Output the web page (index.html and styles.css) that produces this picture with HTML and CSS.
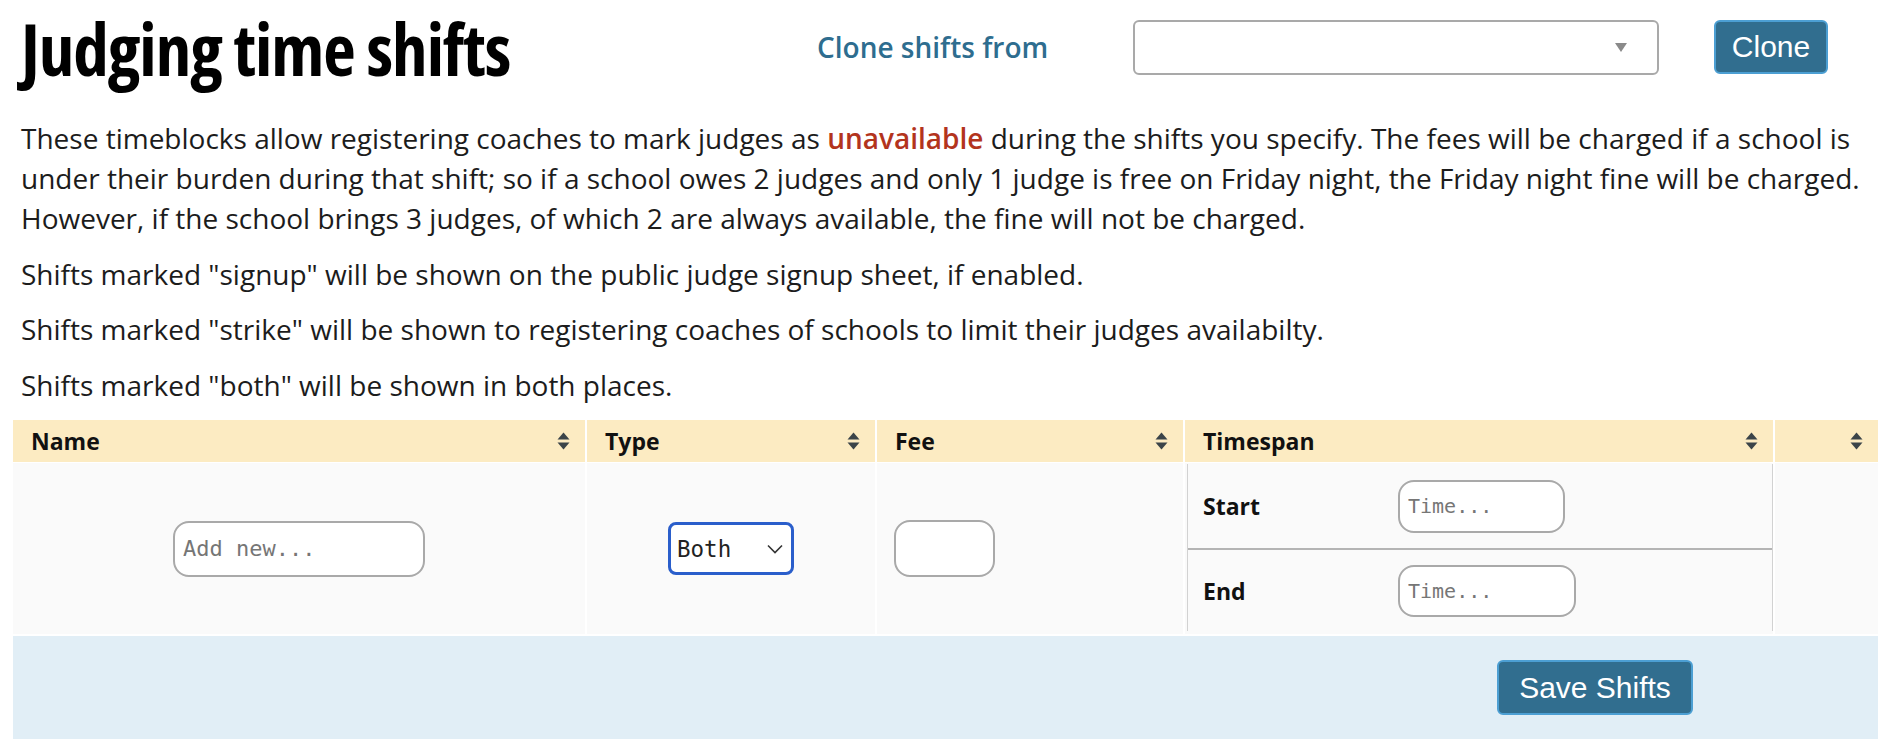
FILE: index.html
```html
<!DOCTYPE html>
<html lang="en">
<head>
<meta charset="utf-8">
<title>Judging time shifts</title>
<link rel="stylesheet" href="styles.css">
</head>
<body>
<div class="page">
  <header class="top">
    <h1 class="title">Judging time shifts</h1>
    <div class="clone">
      <label class="clone-label">Clone shifts from</label>
      <div class="clone-select">
        <svg class="caret" width="12" height="9" viewBox="0 0 12 9"><polygon points="0,0 12,0 6,9" fill="#8a8a8a"/></svg>
      </div>
      <button class="btn clone-btn">Clone</button>
    </div>
  </header>

  <section class="intro">
    <p>These timeblocks allow registering coaches to mark judges as <span class="warn">unavailable</span> during the shifts you specify. The fees will be charged if a school is under their burden during that shift; so if a school owes 2 judges and only 1 judge is free on Friday night, the Friday night fine will be charged. However, if the school brings 3 judges, of which 2 are always available, the fine will not be charged.</p>
    <p>Shifts marked "signup" will be shown on the public judge signup sheet, if enabled.</p>
    <p>Shifts marked "strike" will be shown to registering coaches of schools to limit their judges availabilty.</p>
    <p>Shifts marked "both" will be shown in both places.</p>
  </section>

  <div class="shifts">
    <div class="row thead">
      <div class="th">Name<svg class="sort" width="13" height="20" viewBox="0 0 13 20"><polygon points="0.5,8.5 6.5,1.5 12.5,8.5" fill="#3b4449"/><polygon points="0.5,11.5 6.5,18.5 12.5,11.5" fill="#3b4449"/></svg></div>
      <div class="th">Type<svg class="sort" width="13" height="20" viewBox="0 0 13 20"><polygon points="0.5,8.5 6.5,1.5 12.5,8.5" fill="#3b4449"/><polygon points="0.5,11.5 6.5,18.5 12.5,11.5" fill="#3b4449"/></svg></div>
      <div class="th">Fee<svg class="sort" width="13" height="20" viewBox="0 0 13 20"><polygon points="0.5,8.5 6.5,1.5 12.5,8.5" fill="#3b4449"/><polygon points="0.5,11.5 6.5,18.5 12.5,11.5" fill="#3b4449"/></svg></div>
      <div class="th">Timespan<svg class="sort" width="13" height="20" viewBox="0 0 13 20"><polygon points="0.5,8.5 6.5,1.5 12.5,8.5" fill="#3b4449"/><polygon points="0.5,11.5 6.5,18.5 12.5,11.5" fill="#3b4449"/></svg></div>
      <div class="th"><svg class="sort" width="13" height="20" viewBox="0 0 13 20"><polygon points="0.5,8.5 6.5,1.5 12.5,8.5" fill="#3b4449"/><polygon points="0.5,11.5 6.5,18.5 12.5,11.5" fill="#3b4449"/></svg></div>
    </div>
    <div class="row tbody">
      <div class="td td-center"><input class="field name-field" type="text" placeholder="Add new..."></div>
      <div class="td td-center">
        <div class="type-select"><span>Both</span><svg width="16" height="10" viewBox="0 0 16 10"><polyline points="1,1.5 8,8.5 15,1.5" fill="none" stroke="#333" stroke-width="1.6"/></svg></div>
      </div>
      <div class="td td-fee"><input class="field fee-field" type="text"></div>
      <div class="td td-span">
        <div class="span-box">
          <div class="span-row span-start"><span class="span-label">Start</span><input class="field time-field" type="text" placeholder="Time..."></div>
          <div class="span-row span-end"><span class="span-label">End</span><input class="field time-field time-end" type="text" placeholder="Time..."></div>
        </div>
      </div>
      <div class="td"></div>
    </div>
    <div class="tfoot">
      <button class="btn save-btn">Save Shifts</button>
    </div>
  </div>
</div>
</body>
</html>
```
FILE: styles.css
```css
html, body {
  margin: 0;
  padding: 0;
  background: #fff;
}

body {
  font-family: "Open Sans", "Liberation Sans", sans-serif;
  color: #1c1c1c;
}

.page {
  padding: 0 8px 0 13px;
}

.top {
  display: flex;
  align-items: center;
  height: 97px;
  padding-left: 8px;
}

.title {
  margin: 0;
  width: 796px;
  font-family: "Open Sans", sans-serif;
  font-weight: 700;
  font-stretch: 75%;
  font-size: 71px;
  line-height: 97px;
  color: #000;
  letter-spacing: -1px;
}

.clone {
  display: flex;
  align-items: center;
  padding-bottom: 3px;
}

.clone-label {
  width: 316px;
  font-size: 28px;
  font-weight: 600;
  color: #2e6d8f;
}

.clone-select {
  box-sizing: border-box;
  width: 526px;
  height: 55px;
  border: 2px solid #a9a9a9;
  border-radius: 6px;
  background: #fff;
  display: flex;
  align-items: center;
  justify-content: flex-end;
  padding-right: 30px;
}

.btn {
  font-family: "Liberation Sans", Arial, sans-serif;
  color: #fff;
  background: #316e8f;
  border: 2px solid #4c9fd3;
  border-radius: 6px;
  font-size: 30px;
  cursor: pointer;
}

.clone-btn {
  margin-left: 55px;
  width: 114px;
  height: 54px;
  padding: 0;
}

.intro {
  padding: 21px 0 0 8px;
}

.intro p {
  margin: 0 0 15.5px;
  font-size: 28px;
  line-height: 40px;
}

.warn {
  color: #b3341d;
  font-weight: 600;
}

.shifts {
  width: 1865px;
  margin-top: 3px;
}

.row {
  display: grid;
  grid-template-columns: 572px 288px 306px 588px 103px;
  column-gap: 2px;
}

.thead {
  height: 42px;
}

.th {
  background: #fcebc2;
  display: flex;
  align-items: center;
  justify-content: space-between;
  padding: 0 15px 0 18px;
  font-size: 23px;
  font-weight: 700;
  color: #111;
}

.th:last-child {
  justify-content: flex-end;
}

.sort {
  display: block;
}

.tbody {
  margin-top: 1px;
  height: 171px;
}

.td {
  background: #fafafa;
}

.td-center {
  display: flex;
  align-items: center;
  justify-content: center;
}

.field {
  box-sizing: border-box;
  border: 2px solid #a9a9a9;
  border-radius: 16px;
  background: #fff;
  font-family: "DejaVu Sans Mono", "Liberation Mono", monospace;
  color: #333;
  outline: none;
}

.field::placeholder {
  color: #767676;
}

.name-field {
  width: 252px;
  height: 56px;
  padding: 0 8px;
  font-size: 22px;
}

.type-select {
  box-sizing: border-box;
  width: 126px;
  height: 53px;
  border: 3px solid #2a5ecb;
  border-radius: 8px;
  background: #fff;
  display: flex;
  align-items: center;
  justify-content: space-between;
  padding: 0 8px 0 6px;
  font-family: "DejaVu Sans Mono", "Liberation Mono", monospace;
  font-size: 22.5px;
  color: #222;
}

.td-fee {
  display: flex;
  align-items: center;
  padding-left: 17px;
}

.fee-field {
  width: 101px;
  height: 57px;
}

.td-span {
  padding: 1px 0 3px 2px;
}

.span-box {
  height: 100%;
  box-sizing: border-box;
  border-left: 1px solid #d2d2d2;
  border-right: 1px solid #d2d2d2;
  display: flex;
  flex-direction: column;
}

.span-row {
  display: flex;
  align-items: center;
  padding-left: 15px;
}

.span-start {
  height: 84px;
  border-bottom: 2px solid #b4b4b4;
}

.span-end {
  flex: 1;
}

.span-label {
  width: 195px;
  font-size: 23px;
  font-weight: 700;
  color: #111;
}

.time-field {
  width: 167px;
  height: 53px;
  padding: 0 8px;
  font-size: 20px;
}

.time-end {
  width: 178px;
  height: 52px;
}

.tfoot {
  margin-top: 2px;
  height: 103px;
  background: #e1eef6;
  box-sizing: border-box;
  padding: 24px 0 0 1484px;
}

.save-btn {
  width: 196px;
  height: 55px;
  padding: 0;
}
```
